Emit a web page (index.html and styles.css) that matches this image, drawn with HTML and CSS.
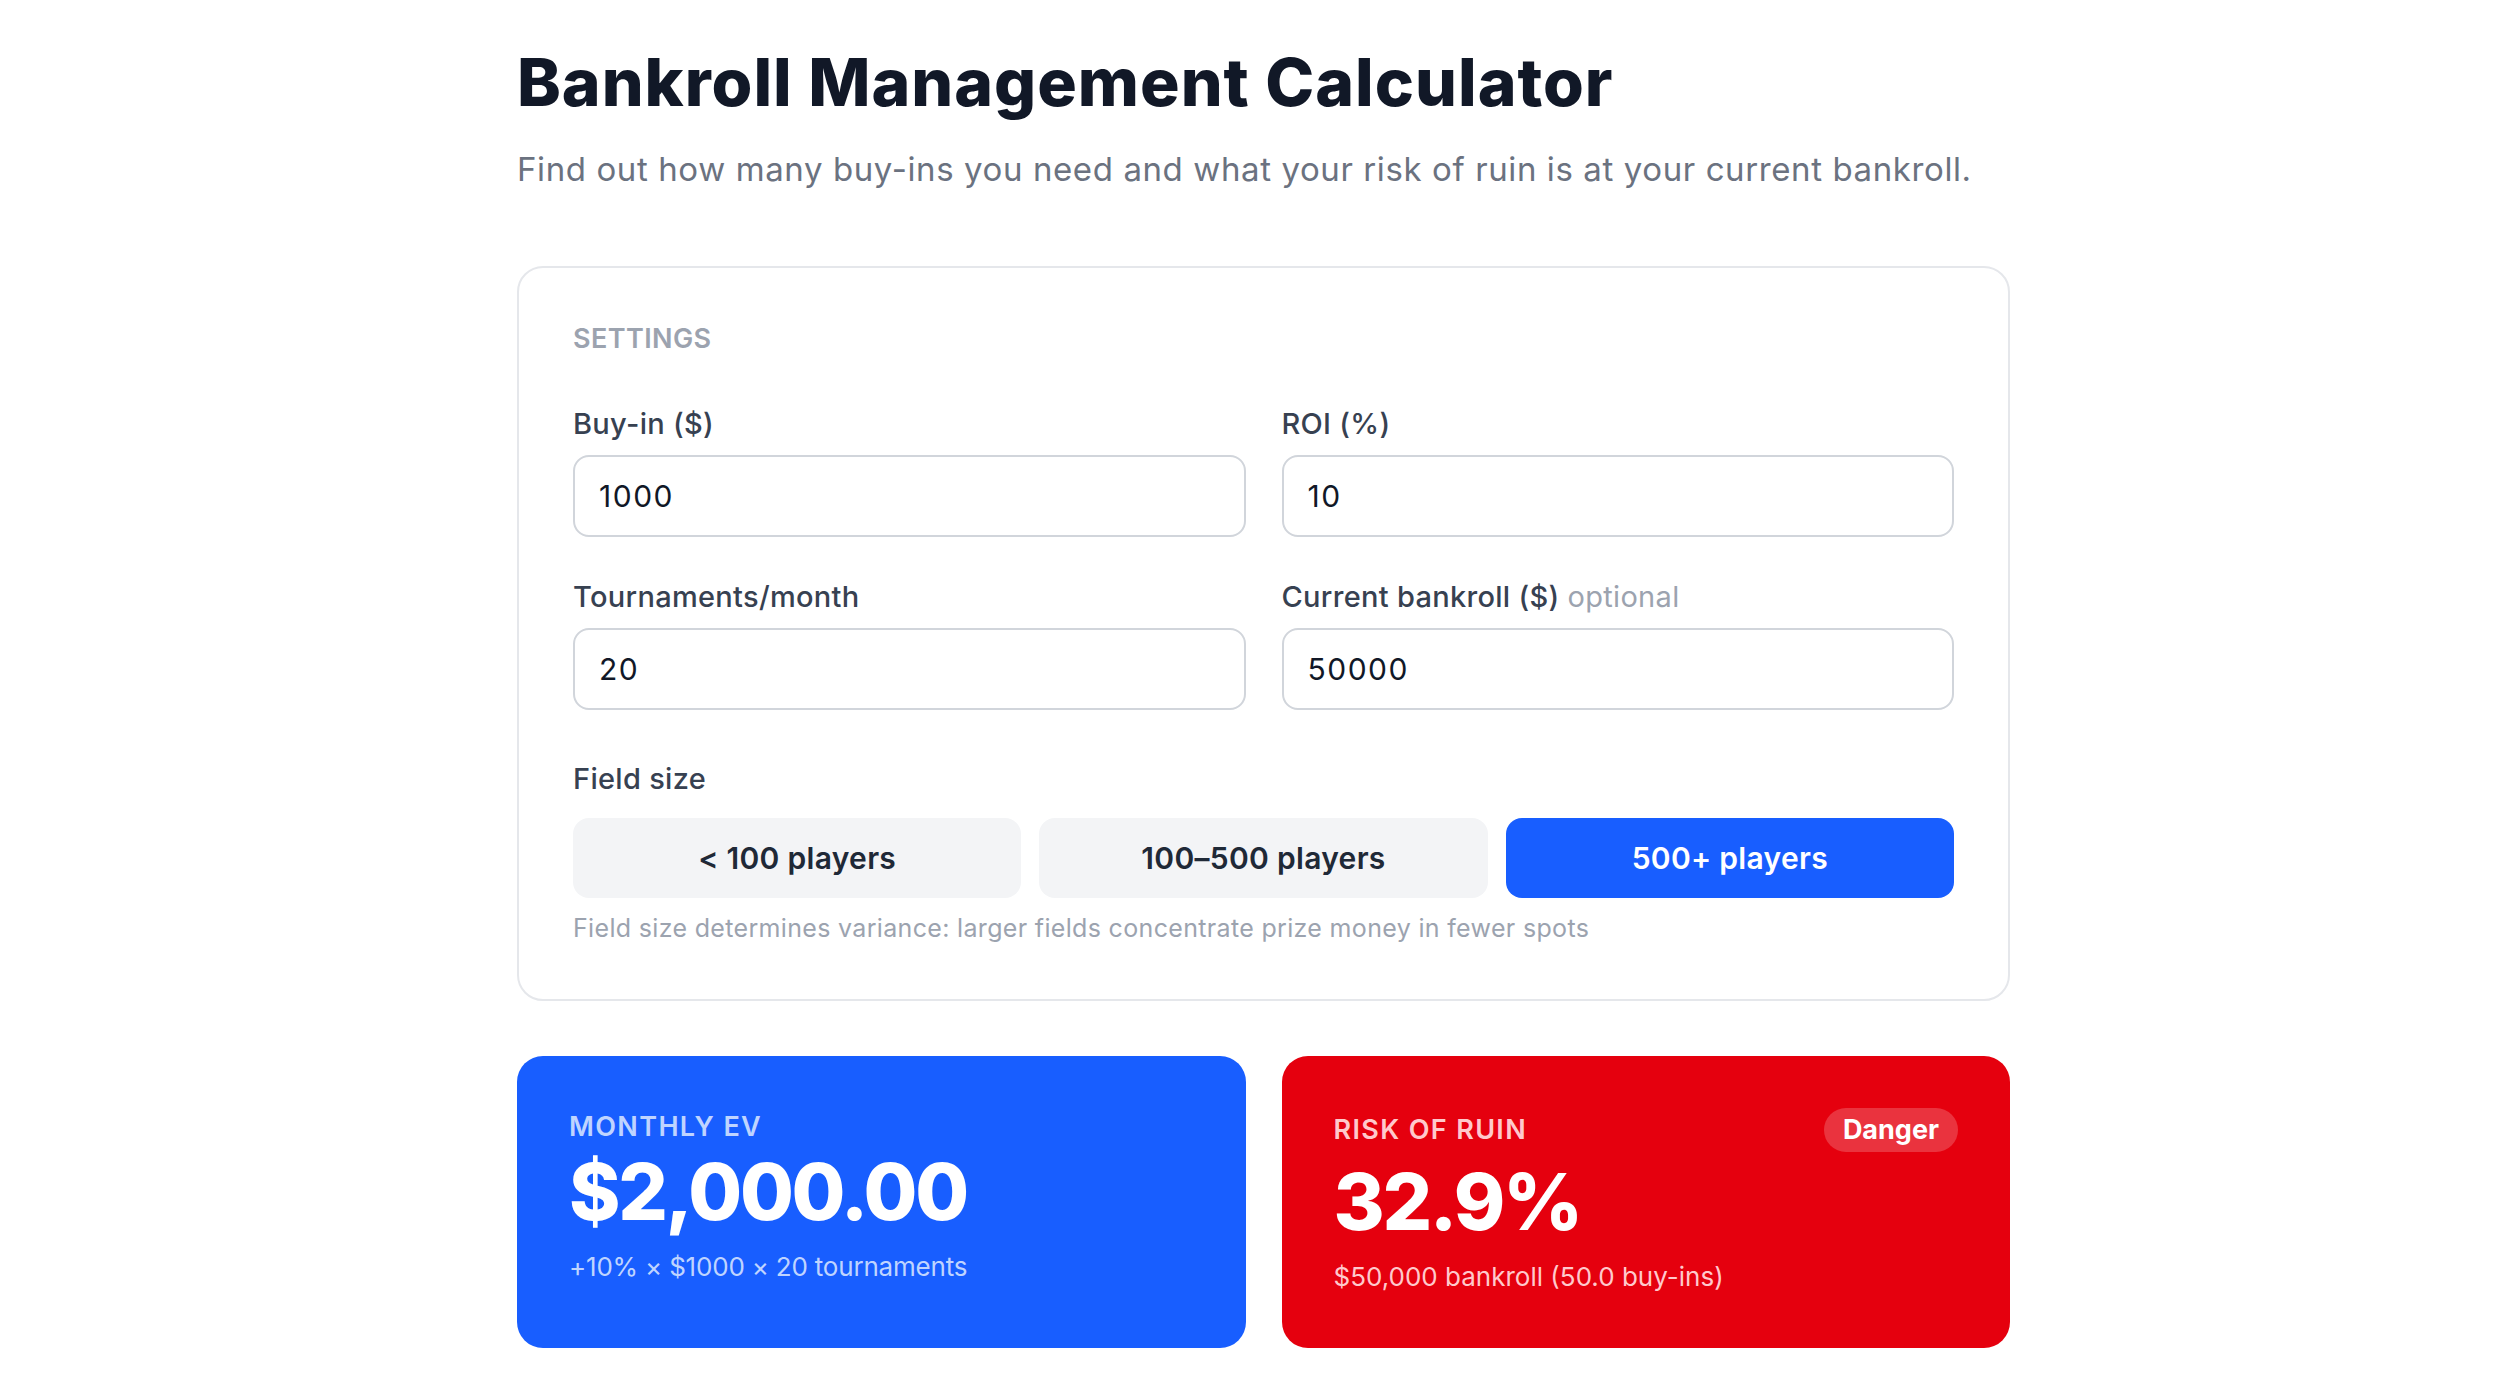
FILE: index.html
```html
<!DOCTYPE html>
<html lang="en">
<head>
    <meta charset="UTF-8">
    <meta name="viewport" content="width=device-width, initial-scale=1.0">
    <title>Bankroll Management Calculator</title>
    <link rel="stylesheet" href="styles.css">
</head>
<body>
    <div class="page">
        <h1 class="title">Bankroll Management Calculator</h1>
        <p class="lead">Find out how many buy-ins you need and what your risk of ruin is at your current bankroll.</p>

        <div class="settings">
            <div class="section_title">SETTINGS</div>

            <div class="fields">
                <label class="field">
                    <span class="field_label">Buy-in ($)</span>
                    <input class="field_input" type="text" value="1000">
                </label>
                <label class="field">
                    <span class="field_label">ROI (%)</span>
                    <input class="field_input" type="text" value="10">
                </label>
                <label class="field">
                    <span class="field_label">Tournaments/month</span>
                    <input class="field_input" type="text" value="20">
                </label>
                <label class="field">
                    <span class="field_label">Current bankroll ($) <em class="optional">optional</em></span>
                    <input class="field_input" type="text" value="50000">
                </label>
            </div>

            <div class="field_size">
                <div class="field_label">Field size</div>
                <div class="size_btns">
                    <button class="size_btn">&lt; 100 players</button>
                    <button class="size_btn">100–500 players</button>
                    <button class="size_btn active">500+ players</button>
                </div>
                <p class="hint">Field size determines variance: larger fields concentrate prize money in fewer spots</p>
            </div>
        </div>

        <div class="results">
            <div class="result result_ev">
                <div class="result_label">MONTHLY EV</div>
                <div class="result_value">$2,000.00</div>
                <div class="result_sub">+10% × $1000 × 20 tournaments</div>
            </div>
            <div class="result result_ruin">
                <div class="result_head">
                    <div class="result_label">RISK OF RUIN</div>
                    <span class="badge">Danger</span>
                </div>
                <div class="result_value">32.9%</div>
                <div class="result_sub">$50,000 bankroll (50.0 buy-ins)</div>
            </div>
        </div>
    </div>
</body>
</html>
```

FILE: styles.css
```css
*{
    margin: 0;
    padding: 0;
    box-sizing: border-box;
}
body{
    background: #fff;
    font-family: Inter, "Noto Sans", sans-serif;
    color: #111827;
}
.page{
    width: 1493px;
    margin-left: 517px;
    padding-top: 43px;
}
.title{
    font-size: 66px;
    line-height: 79px;
    font-weight: 800;
    letter-spacing: 0.015em;
    color: #111827;
}
.lead{
    margin-top: 22px;
    font-size: 33px;
    line-height: 50px;
    letter-spacing: 0.6px;
    color: #6b7280;
}

/* settings card */
.settings{
    margin-top: 72px;
    border: 2px solid #e5e7eb;
    border-radius: 26px;
    padding: 51px 54px 52px;
}
.section_title{
    font-size: 27px;
    line-height: 40px;
    font-weight: 600;
    letter-spacing: 0.4px;
    color: #9ca3af;
    margin-bottom: 43px;
}
.fields{
    display: grid;
    grid-template-columns: 1fr 1fr;
    column-gap: 36px;
    row-gap: 38px;
}
.field{
    display: flex;
    flex-direction: column;
    gap: 10px;
}
.field_label{
    font-size: 29px;
    line-height: 43px;
    font-weight: 500;
    letter-spacing: 0.3px;
    color: #374151;
}
.optional{
    font-style: normal;
    font-weight: 400;
    color: #9ca3af;
}
.field_input{
    height: 82px;
    border: 2px solid #d1d5db;
    border-radius: 16px;
    padding: 0 24px;
    font-family: inherit;
    font-size: 30px;
    letter-spacing: 1.5px;
    color: #111827;
    background: #fff;
    outline: none;
}
.field_size{
    margin-top: 47px;
}
.size_btns{
    display: grid;
    grid-template-columns: 1fr 1fr 1fr;
    gap: 18px;
    margin-top: 18px;
}
.size_btn{
    height: 80px;
    border: 0;
    border-radius: 16px;
    background: #f3f4f6;
    font-family: inherit;
    font-size: 30px;
    font-weight: 600;
    letter-spacing: 0.3px;
    color: #1f2937;
    cursor: pointer;
}
.size_btn.active{
    background: #185eff;
    color: #fff;
}
.hint{
    margin-top: 11px;
    font-size: 25px;
    line-height: 38px;
    letter-spacing: 0.33px;
    color: #9ca3af;
}

/* result cards */
.results{
    display: grid;
    grid-template-columns: 1fr 1fr;
    gap: 36px;
    margin-top: 55px;
}
.result{
    border-radius: 26px;
    color: #fff;
}
.result_ev{
    background: #185eff;
    padding: 51px 52px;
}
.result_ruin{
    background: #e5000e;
    padding: 52px;
}
.result_head{
    display: flex;
    justify-content: space-between;
    align-items: center;
    margin-bottom: 5px;
}
.result_label{
    font-size: 27px;
    line-height: 40px;
    font-weight: 600;
    letter-spacing: 0.05em;
}
.result_ev .result_label,
.result_ev .result_sub{
    color: #bfd4ff;
}
.result_ruin .result_label,
.result_ruin .result_sub{
    color: #ffc9cc;
}
.result_value{
    font-size: 78px;
    line-height: 89px;
    font-weight: 800;
    letter-spacing: -0.03em;
}
.result_sub{
    margin-top: 12px;
    font-size: 26px;
    line-height: 38px;
}
.result_ev .result_sub{
    letter-spacing: -0.2px;
}
.badge{
    display: inline-block;
    height: 44px;
    line-height: 44px;
    padding: 0 19px;
    border-radius: 22px;
    background: rgba(255, 255, 255, 0.2);
    font-size: 27px;
    font-weight: 700;
    color: #fff;
}
```
